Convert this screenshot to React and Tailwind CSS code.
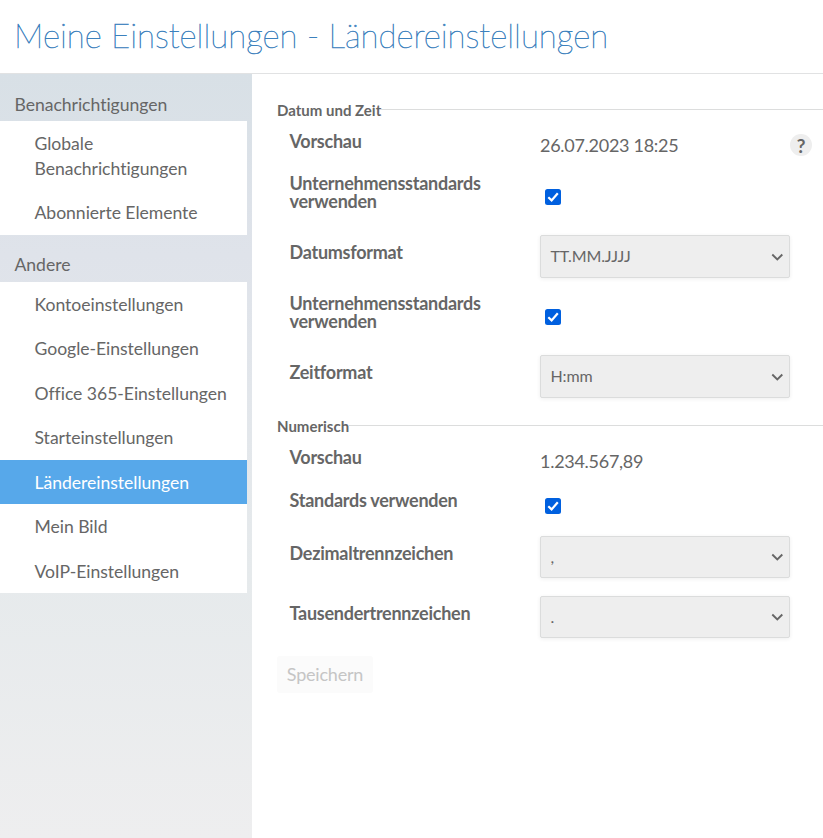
const FONT = "font-['Lato','Liberation_Sans',sans-serif]";

function NavSection({ title, gap, children }) {
  return (
    <section>
      <h2 className={`h-[47px] pl-[14.5px] text-[17.6px] leading-6 font-normal tracking-[-0.04px] ${gap}`}>{title}</h2>
      <ul className="w-[247px] bg-white">{children}</ul>
    </section>
  );
}

function NavItem({ children, active }) {
  return (
    <li
      className={
        active
          ? "bg-[#57a8ea] pt-[10px] pr-[15px] pb-[9.45px] pl-[34.5px] text-[17.6px] leading-[25px] tracking-[-0.04px] text-white"
          : "pt-[10px] pr-[15px] pb-[9.45px] pl-[34.5px] text-[17.6px] leading-[25px] tracking-[-0.04px]"
      }
    >
      {children}
    </li>
  );
}

function Legend({ children }) {
  return (
    <div className="flex h-[19px] items-start">
      <h3 className="text-[15px] leading-[19px] font-bold">{children}</h3>
      <span className="mt-2 h-px flex-1 bg-[#dcdddd]" />
    </div>
  );
}

function Row({ label, height, children }) {
  return (
    <div className={`flex pl-[12.5px] ${height}`}>
      <label className="w-[250.5px] shrink-0 pr-8 text-[18px] leading-[18px] font-bold tracking-[-0.26px]">{label}</label>
      {children}
    </div>
  );
}

function Check() {
  return (
    <span className="mt-[15px] ml-[5px] flex size-4 items-center justify-center rounded-[2.5px] bg-[#0060df]">
      <svg className="size-4" viewBox="0 0 16 16" fill="none" stroke="#fff" strokeWidth="2.2">
        <path d="M3.3 8.3 6.6 11.4 12.8 4.2" />
      </svg>
    </span>
  );
}

function Select({ value, size, textPad }) {
  return (
    <div
      className={`flex w-[250px] items-center justify-between rounded-[2px] border border-[#dbdcdc] bg-[#eeeeee] pr-[6px] pl-[9.5px] text-[16px] tracking-[-0.12px] shadow-[0_1px_4px_rgba(0,0,0,0.07)] ${size}`}
    >
      <span className={`leading-5 ${textPad}`}>{value}</span>
      <svg className="size-3" viewBox="0 0 12 12" fill="none" stroke="#666" strokeWidth="1.9">
        <path d="M1.3 3.5 6.3 8.5 11.3 3.5" />
      </svg>
    </div>
  );
}

export default function App() {
  return (
    <div className={`${FONT} flex h-[838px] w-[823px] flex-col overflow-hidden bg-white text-[#666666]`}>
      <header className="h-[74px] shrink-0 border-b border-[#e1e2e3] pt-[13px] pl-[14px]">
        <h1 className="text-[33px] leading-[44px] font-thin whitespace-nowrap text-[#3c81bd] [-webkit-text-stroke:0.6px_#3c81bd]">
          Meine Einstellungen - Ländereinstellungen
        </h1>
      </header>
      <div className="flex flex-1">
        <nav className="w-[252px] shrink-0 bg-[linear-gradient(#d8e0e6_0px,#dfe3ea_180px,#e6eaec_500px,#eeeeef_764px)]">
          <NavSection title="Benachrichtigungen" gap="pt-[19px]">
            <NavItem>Globale Benachrichtigungen</NavItem>
            <NavItem>Abonnierte Elemente</NavItem>
          </NavSection>
          <NavSection title="Andere" gap="pt-[18px]">
            <NavItem>Kontoeinstellungen</NavItem>
            <NavItem>Google-Einstellungen</NavItem>
            <NavItem>Office 365-Einstellungen</NavItem>
            <NavItem>Starteinstellungen</NavItem>
            <NavItem active>Ländereinstellungen</NavItem>
            <NavItem>Mein Bild</NavItem>
            <NavItem>VoIP-Einstellungen</NavItem>
          </NavSection>
        </nav>
        <main className="flex-1 pt-[27px] pl-[25px]">
          <section className="h-[316px]">
            <Legend>Datum und Zeit</Legend>
            <div className="pt-3">
              <Row label="Vorschau" height="h-[42px]">
                <span className="mt-[2px] text-[18px] leading-[22px] tracking-[-0.28px]">26.07.2023 18:25</span>
                <span className="mt-[2px] mr-[11px] ml-auto flex size-[22px] items-center justify-center rounded-full bg-[#eeeeee] text-[19px] leading-none font-bold">?</span>
              </Row>
              <Row label="Unternehmensstandards verwenden" height="h-[69px]"><Check /></Row>
              <Row label="Datumsformat" height="h-[51px]">
                <Select value="TT.MM.JJJJ" size="mt-[-8px] h-[43px]" textPad="pb-[2px]" />
              </Row>
              <Row label="Unternehmensstandards verwenden" height="h-[69px]"><Check /></Row>
              <Row label="Zeitformat" height="h-[51px]">
                <Select value="H:mm" size="mt-[-8px] h-[43px]" textPad="pb-[2px]" />
              </Row>
            </div>
          </section>
          <section>
            <Legend>Numerisch</Legend>
            <div className="pt-3">
              <Row label="Vorschau" height="h-[43px]">
                <span className="mt-[2px] text-[18px] leading-[22px] tracking-[-0.28px]">1.234.567,89</span>
              </Row>
              <Row label="Standards verwenden" height="h-[53px]">
                <div className="mt-[-8px]"><Check /></div>
              </Row>
              <Row label="Dezimaltrennzeichen" height="h-[60px]">
                <Select value="," size="mt-[-8px] h-[42px]" textPad="" />
              </Row>
              <Row label="Tausendertrennzeichen" height="h-[52px]">
                <Select value="." size="mt-[-8px] h-[42px]" textPad="" />
              </Row>
            </div>
          </section>
          <button className="h-[37px] w-[96px] rounded-[3px] bg-[#fbfbfb] text-[18px] tracking-[-0.2px] text-[#c5c5c5]">Speichern</button>
        </main>
      </div>
    </div>
  );
}
